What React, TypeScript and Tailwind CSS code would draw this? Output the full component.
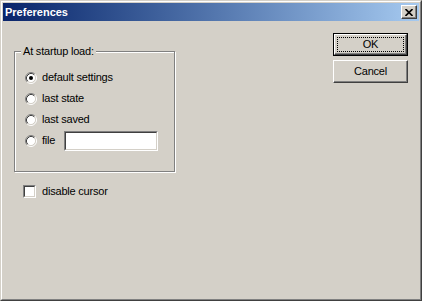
import React from "react";

const font = "font-['Tahoma','Liberation_Sans',Arial,sans-serif]";

function Radio({ checked }: { checked?: boolean }) {
  return (
    <svg width="12" height="12" viewBox="0 0 12 12" className="shrink-0">
      <circle cx="6" cy="6" r="4.5" fill="#fff" />
      <path d="M2.11 9.89 A5.5 5.5 0 0 1 9.89 2.11" fill="none" stroke="#808080" />
      <path d="M9.89 2.11 A5.5 5.5 0 0 1 2.11 9.89" fill="none" stroke="#fff" />
      <path d="M2.82 9.18 A4.5 4.5 0 0 1 9.18 2.82" fill="none" stroke="#404040" />
      <path d="M9.18 2.82 A4.5 4.5 0 0 1 2.82 9.18" fill="none" stroke="#d4d0c8" />
      {checked && <circle cx="6" cy="6" r="2" fill="#000" />}
    </svg>
  );
}

// sunken 2px edge used by text box and check box
function Sunken({ className, children }: { className: string; children?: React.ReactNode }) {
  return (
    <div className={`border border-t-[#808080] border-l-[#808080] border-b-white border-r-white ${className}`}>
      <div className="h-full w-full border border-t-[#404040] border-l-[#404040] border-b-[#d4d0c8] border-r-[#d4d0c8] bg-white">
        {children}
      </div>
    </div>
  );
}

function RadioRow({ label, checked, children }: { label: string; checked?: boolean; children?: React.ReactNode }) {
  return (
    <div className="flex h-[21px] items-center">
      <Radio checked={checked} />
      <span className="ml-[5px]">{label}</span>
      {children}
    </div>
  );
}

function Button({ label, isDefault }: { label: string; isDefault?: boolean }) {
  if (isDefault) {
    return (
      <div className="h-[23px] w-[75px] border border-black">
        <div className="flex h-full w-full items-center justify-center border border-t-white border-l-white border-b-[#404040] border-r-[#404040] p-[2px] shadow-[inset_-1px_-1px_0_#808080]">
          <div className="flex h-full w-full items-center justify-center border border-dotted border-black">
            {label}
          </div>
        </div>
      </div>
    );
  }
  return (
    <div className="flex h-[23px] w-[75px] items-center justify-center border border-t-white border-l-white border-b-[#404040] border-r-[#404040] shadow-[inset_-1px_-1px_0_#808080]">
      {label}
    </div>
  );
}

export default function App() {
  return (
    <div className={`h-[301px] w-[422px] border border-t-[#d4d0c8] border-l-[#d4d0c8] border-b-[#404040] border-r-[#404040] text-[11px] tracking-[-0.2px] text-black ${font}`}>
      <div className="flex h-full w-full flex-col border border-t-white border-l-white border-b-[#808080] border-r-[#808080] bg-[#d4d0c8] p-px">
        {/* title bar */}
        <div className="flex h-[18px] shrink-0 items-center justify-between bg-linear-to-r from-[#0a246a] to-[#a6caf0] pl-[2px] pr-[2px]">
          <span className="text-[11px] font-bold leading-none tracking-normal text-white">Preferences</span>
          <div className="flex h-[14px] w-[16px] items-center justify-center border border-t-white border-l-white border-b-[#404040] border-r-[#404040] bg-[#d4d0c8] shadow-[inset_-1px_-1px_0_#808080]">
            <svg width="8" height="7" viewBox="0 0 8 7">
              <path d="M0.5 0 L7.5 7 M7.5 0 L0.5 7" stroke="#000" strokeWidth="1.6" />
            </svg>
          </div>
        </div>

        {/* body */}
        <div className="flex flex-1 justify-between pr-[11px]">
          <div className="flex flex-col pl-[11px]">
            <fieldset className="mt-[24px] w-[161px] border border-[#808080] px-[6px] pb-[20px] shadow-[1px_1px_0_#fff,inset_1px_1px_0_#fff]">
              <legend className="bg-[#d4d0c8] px-[2px] leading-[13px]">At startup load:</legend>
              <div className="mt-[9px] flex flex-col pl-[4px]">
                <RadioRow label="default settings" checked />
                <RadioRow label="last state" />
                <RadioRow label="last saved" />
                <RadioRow label="file">
                  <Sunken className="ml-[9px] h-[20px] w-[94px]" />
                </RadioRow>
              </div>
            </fieldset>
            <div className="mt-[9px] flex h-[21px] items-center pl-[9px]">
              <Sunken className="h-[13px] w-[13px]" />
              <span className="ml-[6px]">disable cursor</span>
            </div>
          </div>

          <div className="flex flex-col gap-[4px] pt-[12px]">
            <Button label="OK" isDefault />
            <Button label="Cancel" />
          </div>
        </div>
      </div>
    </div>
  );
}
